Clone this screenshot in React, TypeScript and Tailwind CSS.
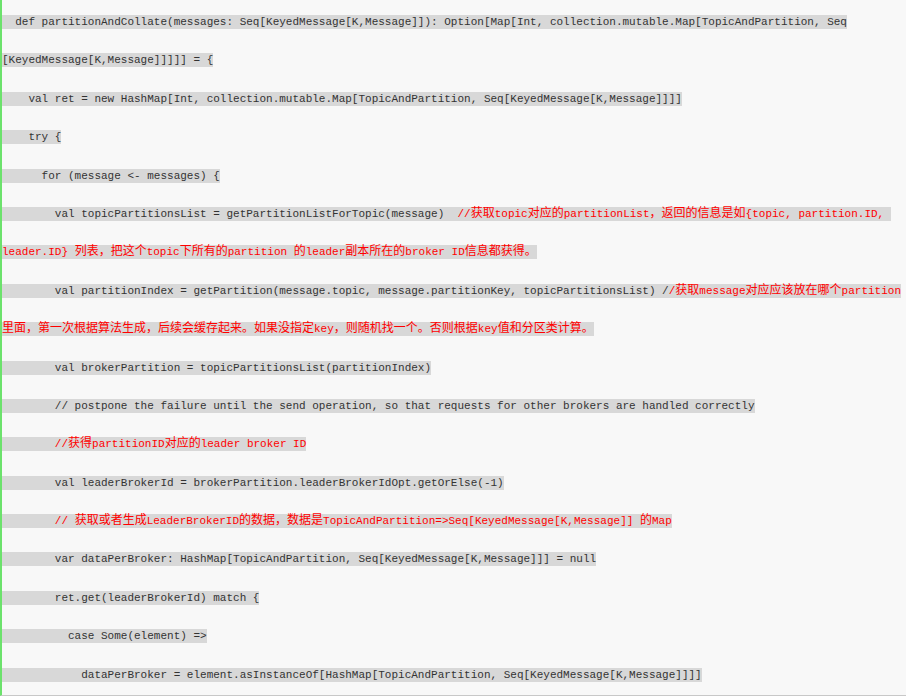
import React from "react";

type Seg = { t: string; red?: boolean };

const CJK_RE = /[\u3000-\u303f\u4e00-\u9fff\uff00-\uffef]/;

function splitRuns(s: string): { t: string; cjk: boolean }[] {
  const out: { t: string; cjk: boolean }[] = [];
  for (const ch of s) {
    const c = CJK_RE.test(ch);
    const last = out[out.length - 1];
    if (last && last.cjk === c) last.t += ch;
    else out.push({ t: ch, cjk: c });
  }
  return out;
}

const lines: Seg[][] = [
  [{ t: "  def partitionAndCollate(messages: Seq[KeyedMessage[K,Message]]): Option[Map[Int, collection.mutable.Map[TopicAndPartition, Seq" }],
  [{ t: "[KeyedMessage[K,Message]]]]] = {" }],
  [{ t: "    val ret = new HashMap[Int, collection.mutable.Map[TopicAndPartition, Seq[KeyedMessage[K,Message]]]]" }],
  [{ t: "    try {" }],
  [{ t: "      for (message <- messages) {" }],
  [
    { t: "        val topicPartitionsList = getPartitionListForTopic(message)  " },
    { t: "//获取topic对应的partitionList，返回的信息是如{topic, partition.ID, ", red: true },
  ],
  [{ t: "leader.ID} 列表，把这个topic下所有的partition 的leader副本所在的broker ID信息都获得。", red: true }],
  [
    { t: "        val partitionIndex = getPartition(message.topic, message.partitionKey, topicPartitionsList) /" },
    { t: "/获取message对应应该放在哪个partition", red: true },
  ],
  [{ t: "里面，第一次根据算法生成，后续会缓存起来。如果没指定key，则随机找一个。否则根据key值和分区类计算。", red: true }],
  [{ t: "        val brokerPartition = topicPartitionsList(partitionIndex)" }],
  [{ t: "        // postpone the failure until the send operation, so that requests for other brokers are handled correctly" }],
  [{ t: "        " }, { t: "//获得partitionID对应的leader broker ID", red: true }],
  [{ t: "        val leaderBrokerId = brokerPartition.leaderBrokerIdOpt.getOrElse(-1)" }],
  [{ t: "        " }, { t: "// 获取或者生成LeaderBrokerID的数据，数据是TopicAndPartition=>Seq[KeyedMessage[K,Message]] 的Map", red: true }],
  [{ t: "        var dataPerBroker: HashMap[TopicAndPartition, Seq[KeyedMessage[K,Message]]] = null" }],
  [{ t: "        ret.get(leaderBrokerId) match {" }],
  [{ t: "          case Some(element) =>" }],
  [{ t: "            dataPerBroker = element.asInstanceOf[HashMap[TopicAndPartition, Seq[KeyedMessage[K,Message]]]]" }],
];

function Line({ segs }: { segs: Seg[] }) {
  return (
    <div className="h-[38.4px] leading-[38.4px] whitespace-pre">
      <span className="bg-[#d8d8d8] py-[1px]">
        {segs.map((s, i) => (
          <span key={i} className={s.red ? "text-[#ff0000]" : "text-[#333333]"}>
            {splitRuns(s.t).map((r, j) =>
              r.cjk ? (
                <span
                  key={j}
                  className="text-[12px] leading-[12px] font-['Noto_Sans_CJK_SC',sans-serif]"
                >
                  {r.t}
                </span>
              ) : (
                <React.Fragment key={j}>{r.t}</React.Fragment>
              )
            )}
          </span>
        ))}
      </span>
    </div>
  );
}

export default function App() {
  return (
    <div className="w-full h-[696px] overflow-hidden bg-[#f8f8f8] border-l-2 border-l-[#6ce26c] border-b border-b-[#c8c8c8] pt-[3px] font-['Liberation_Mono','Noto_Sans_CJK_SC',monospace] text-[11px]">
      {lines.map((segs, i) => (
        <Line key={i} segs={segs} />
      ))}
    </div>
  );
}
